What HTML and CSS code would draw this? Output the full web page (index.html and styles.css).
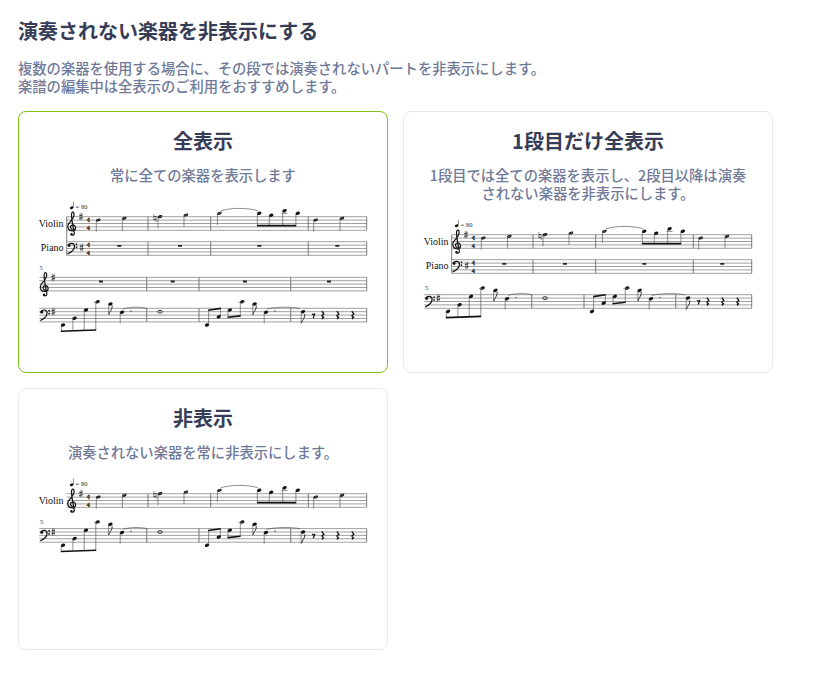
FILE: index.html
```html
<!DOCTYPE html>
<html lang="en">
<head>
<meta charset="UTF-8">
<meta name="viewport" content="width=device-width, initial-scale=1.0">
<title>演奏されない楽器を非表示にする</title>
<link rel="stylesheet" href="styles.css">
</head>
<body>
    <!-- Shared score parts, used by all three cards -->
    <svg class="score-defs" width="0" height="0" aria-hidden="true">
        <defs>
            <path id="hollow" d="M-2.3 .5C-2.3 -.7 -.5 -1.6 1 -1.6C2 -1.6 2.3 -1 2.3 -.5C2.3 .7 .5 1.6 -1 1.6C-2 1.6 -2.3 1 -2.3 .5ZM-1.4 .7C-1.1 1 .2 .3 1.4 -.7C1.1 -1 -.2 -.3 -1.4 .7Z" fill-rule="evenodd"/>
            <ellipse id="head" rx="2.3" ry="1.6" transform="rotate(-22)"/>
            <g id="sharp">
                <path class="thin" d="M-.8 -3.6V4M.8 -4V3.6"/>
                <path class="thick" d="M-1.8 -.9L1.8 -1.8M-1.8 1.8L1.8 .9"/>
            </g>
            <g id="natural">
                <path class="thin" d="M-1.2 -4V2M1.2 -2V4"/>
                <path class="thick" d="M-1.2 -1L1.2 -1.8M-1.2 1.8L1.2 1"/>
            </g>
            <path id="quarter-rest" class="rest-line" d="M-.9 -3.8L1.2 -1L-.9 .8L1.3 2.8C0 2.4 -1 3 0 4.2"/>
            <g id="treble-clef">
                <path class="clef" d="M6.2 12.8C3.4 12.8 2.9 8.8 5.6 8.3C9.6 7.8 10 13.6 6.2 14.1C2.2 14.6 .2 11.3 1.4 8.1C2.6 4.8 7.4 2.3 7.4 -2.2C7.4 -4.9 5.6 -5.4 5.1 -3.7C4.1 -1.2 5.1 2.3 6.6 11.3L7.6 16.3C7.9 18.8 4.6 19.3 4.1 17.3"/>
                <circle cx="4.8" cy="17.4" r="1.2"/>
            </g>
            <g id="bass-clef">
                <path class="clef" d="M1.6 3.8C2 1.2 7.8 .6 7.8 4.6C7.8 8.2 4 10.8 1 12.2"/>
                <circle cx="2.4" cy="3.9" r="1.4"/>
                <circle cx="9.8" cy="2.4" r=".9"/>
                <circle cx="9.8" cy="5.4" r=".9"/>
            </g>

            <g id="violin-staff">
                <path class="staff" d="M66.7 216.7H366.7M66.7 220.1H366.7M66.7 223.5H366.7M66.7 226.9H366.7M66.7 230.3H366.7"/>
                <path class="bar" d="M148 216.7V230.3M210.7 216.7V230.3M308.3 216.7V230.3M366.7 216.7V230.3"/>
                <use href="#treble-clef" x="66.7" y="216.7"/>
                <use href="#sharp" x="81" y="216.7"/>
                <use href="#hollow" x="98.3" y="220"/>
                <use href="#hollow" x="124.3" y="218.3"/>
                <use href="#natural" x="155" y="218"/>
                <use href="#hollow" x="160" y="216.7"/>
                <use href="#hollow" x="186" y="215"/>
                <use href="#hollow" x="219.4" y="213.3"/>
                <use href="#head" x="259.2" y="213.3"/>
                <use href="#head" x="271.2" y="215.3"/>
                <use href="#head" x="284.6" y="210.7"/>
                <use href="#head" x="297.8" y="213.3"/>
                <use href="#hollow" x="315.7" y="220"/>
                <use href="#hollow" x="342" y="218.3"/>
                <path class="stem" d="M96.3 220.5V231.7M122.4 218.8V230.7M158 217.2V228.3M184 215.5V227M217.4 213.8V225M313.7 220.5V231.7M340 218.8V230.7M257.3 213.8V226M269.3 215.8V226M282.7 211.2V226M295.9 213.8V226M281.5 213.4H287.6"/>
                <path class="beam" d="M257 225.6H296.2"/>
                <path class="tie" d="M220.7 210.8C232 207.6 246 207.6 257.8 210.6"/>
            </g>

            <g id="piano-staff">
                <path class="staff" d="M66.7 241.7H366.7M66.7 245.1H366.7M66.7 248.5H366.7M66.7 251.9H366.7M66.7 255.3H366.7"/>
                <path class="bar" d="M66.7 216.7V255.3M148 241.7V255.3M210.7 241.7V255.3M308.3 241.7V255.3M366.7 241.7V255.3"/>
                <use href="#bass-clef" x="66.7" y="241.7"/>
                <use href="#sharp" x="81.7" y="247.5"/>
                <path class="rests" d="M117.3 244.9h4v1.8h-4zM178 244.9h4v1.8h-4zM257.3 244.9h4v1.8h-4zM335.3 244.9h4v1.8h-4z"/>
            </g>

            <g id="treble-rests">
                <path class="staff" d="M39.3 277.3H366.7M39.3 280.7H366.7M39.3 284.1H366.7M39.3 287.5H366.7M39.3 290.9H366.7"/>
                <path class="bar heavy" d="M146.7 277.3V290.9M199 277.3V290.9M290.7 277.3V290.9"/>
                <path class="bar" d="M366.7 277.3V290.9"/>
                <use href="#treble-clef" x="39.3" y="277.3"/>
                <use href="#sharp" x="53.3" y="277.5"/>
                <path class="rests" d="M99 280.6h4v1.8h-4zM170.7 280.6h4v1.8h-4zM243 280.6h4v1.8h-4zM327 280.6h4v1.8h-4z"/>
            </g>

            <g id="bass-notes">
                <path class="staff" d="M39.3 308.3H366.7M39.3 311.7H366.7M39.3 315.1H366.7M39.3 318.5H366.7M39.3 321.9H366.7"/>
                <path class="bar heavy" d="M146.7 308.3V321.9M199 308.3V321.9M290.7 308.3V321.9"/>
                <path class="bar" d="M366.7 308.3V321.9"/>
                <use href="#bass-clef" x="39.3" y="308.3"/>
                <use href="#sharp" x="53.3" y="311.7"/>
                <use href="#head" x="63" y="325"/>
                <use href="#head" x="74.6" y="318.3"/>
                <use href="#head" x="86" y="310"/>
                <use href="#head" x="97.6" y="301.7"/>
                <use href="#head" x="110.4" y="304"/>
                <use href="#head" x="122" y="312.3"/>
                <circle cx="131" cy="310.9" r=".6"/>
                <ellipse class="whole" cx="160" cy="311.7" rx="2.3" ry="1.4"/>
                <use href="#head" x="207" y="325"/>
                <use href="#head" x="218.8" y="316.7"/>
                <use href="#head" x="229.8" y="310"/>
                <use href="#head" x="242.2" y="301.7"/>
                <use href="#head" x="254.6" y="304"/>
                <use href="#head" x="266" y="312.3"/>
                <circle cx="275" cy="310.9" r=".6"/>
                <use href="#head" x="303" y="311.7"/>
                <path class="stem" d="M61.3 325.5V331M72.9 318.8V330.6M84.2 310.5V330.2M95.8 302.2V329.8M94 302.2H100M108.6 304.5V315M120.2 312.8V323.4M208.6 324.5V310M220.4 316.2V308.6M228 310.5V317.4M240.3 302.2V316.2M238.5 302.2H244.5M252.8 304.5V315M264.2 312.8V323.4M301.2 312.2V323.4"/>
                <path class="beam" d="M60.8 331.2L96.2 330"/>
                <path class="beam" d="M208.2 310.2L220.8 308.4"/>
                <path class="beam" d="M227.6 317.3L240.6 315.9"/>
                <path class="flag" d="M108.8 314.6C109.6 311 112.6 310 112.2 305.6M252.9 314.6C253.7 311 256.7 310 256.3 305.6M301.4 323C302.2 319.4 305.2 318.4 304.8 314"/>
                <path class="tie" d="M123 309C130 306.8 140 306.6 147.5 308.4M266.7 309C276 306.8 291 306.6 300 308.4"/>
                <path class="rest-line" d="M312.2 313.6C312.8 314.8 314 314.8 314.9 313.6L313.2 318"/>
                <use href="#quarter-rest" x="322.7" y="315"/>
                <use href="#quarter-rest" x="337.7" y="315"/>
                <use href="#quarter-rest" x="352.7" y="315"/>
            </g>

            <g id="tempo">
                <ellipse cx="71.7" cy="207.7" rx="1.9" ry="1.3" transform="rotate(-22 71.7 207.7)"/>
                <path class="stem" d="M73.4 207.4V201.6"/>
            </g>
        </defs>
    </svg>

    <h1 class="page-title">演奏されない楽器を非表示にする</h1>
    <p class="page-desc">複数の楽器を使用する場合に、その段では演奏されないパートを非表示にします。<br>楽譜の編集中は全表示のご利用をおすすめします。</p>

    <div class="option-grid">
        <div class="option-card selected">
            <h2 class="card-title">全表示</h2>
            <p class="card-desc">常に全ての楽器を表示します</p>
            <svg class="score" viewBox="39 200 328 135">
                <use href="#tempo"/>
                <text class="tempo-text" x="75.6" y="208.6">= 80</text>
                <text class="part-name" x="63.6" y="226.6">Violin</text>
                <text class="time-sig" x="88.3" y="222.4">4</text>
                <text class="time-sig" x="88.3" y="229.6">4</text>
                <use href="#violin-staff"/>
                <text class="part-name" x="63.6" y="251">Piano</text>
                <text class="time-sig" x="88.3" y="247.4">4</text>
                <text class="time-sig" x="88.3" y="254.6">4</text>
                <use href="#piano-staff"/>
                <text class="measure-no" x="39.6" y="269.6">5</text>
                <use href="#treble-rests"/>
                <use href="#bass-notes"/>
            </svg>
        </div>

        <div class="option-card">
            <h2 class="card-title">1段目だけ全表示</h2>
            <p class="card-desc">1段目では全ての楽器を表示し、2段目以降は演奏されない楽器を非表示にします。</p>
            <svg class="score" viewBox="39 200 328 135">
                <use href="#tempo"/>
                <text class="tempo-text" x="75.6" y="208.6">= 80</text>
                <text class="part-name" x="63.6" y="226.6">Violin</text>
                <text class="time-sig" x="88.3" y="222.4">4</text>
                <text class="time-sig" x="88.3" y="229.6">4</text>
                <use href="#violin-staff"/>
                <text class="part-name" x="63.6" y="251">Piano</text>
                <text class="time-sig" x="88.3" y="247.4">4</text>
                <text class="time-sig" x="88.3" y="254.6">4</text>
                <use href="#piano-staff"/>
                <text class="measure-no" x="40" y="272">5</text>
                <use href="#bass-notes" y="-31.6"/>
            </svg>
        </div>

        <div class="option-card">
            <h2 class="card-title">非表示</h2>
            <p class="card-desc">演奏されない楽器を常に非表示にします。</p>
            <svg class="score" viewBox="39 200 328 135">
                <use href="#tempo"/>
                <text class="tempo-text" x="75.6" y="208.6">= 80</text>
                <text class="part-name" x="63.6" y="226.6">Violin</text>
                <text class="time-sig" x="88.3" y="222.4">4</text>
                <text class="time-sig" x="88.3" y="229.6">4</text>
                <use href="#violin-staff"/>
                <text class="measure-no" x="40" y="247">5</text>
                <use href="#bass-notes" y="-56.7"/>
            </svg>
        </div>
    </div>
</body>
</html>
```

FILE: styles.css
```css
body {
    margin: 0;
    padding: 19px 18px 40px;
    background: #fff;
    color: #373d57;
    font-family: "Noto Sans CJK JP", "Noto Sans", sans-serif;
}

.score-defs {
    display: block;
    height: 0;
}

.page-title {
    margin: 0;
    font-size: 20px;
    line-height: 24px;
    font-weight: 700;
}

.page-desc {
    margin: 16px 0 16px;
    font-size: 14.3px;
    line-height: 18px;
    font-weight: 500;
    color: #6f7a99;
}

/* Option cards */
.option-grid {
    display: grid;
    grid-template-columns: 370px 370px;
    grid-auto-rows: 262px;
    gap: 15px;
}

.option-card {
    box-sizing: border-box;
    padding: 16px 20px 0;
    border: 1px solid #e8e9ee;
    border-radius: 8px;
    text-align: center;
}

.option-card.selected {
    border-color: #7ec31e;
}

.card-title {
    margin: 0;
    font-size: 20px;
    line-height: 26px;
    font-weight: 700;
}

.card-desc {
    margin: 12px 0 16px;
    font-size: 14.3px;
    line-height: 18px;
    font-weight: 500;
    color: #6f7a99;
}

/* Score drawing */
.score {
    display: block;
    width: 328px;
    height: 135px;
    overflow: visible;
    fill: #111;
}

.staff {
    fill: none;
    stroke: #808080;
    stroke-width: 0.75;
}

.bar {
    fill: none;
    stroke: #5c5c5c;
    stroke-width: 0.8;
}

.bar.heavy {
    stroke: #808080;
    stroke-width: 1.1;
}

.stem, .thin {
    fill: none;
    stroke: #555;
    stroke-width: 0.65;
}

.thick {
    fill: none;
    stroke: #222;
    stroke-width: 0.9;
}

.beam {
    fill: none;
    stroke: #111;
    stroke-width: 1.6;
}

.tie {
    fill: none;
    stroke: #444;
    stroke-width: 0.6;
}

.clef {
    fill: none;
    stroke: #111;
    stroke-width: 1.2;
}

.flag {
    fill: none;
    stroke: #222;
    stroke-width: 0.9;
}

.rest-line {
    fill: none;
    stroke: #111;
    stroke-width: 1.25;
}

.whole {
    fill: none;
    stroke: #222;
    stroke-width: 0.9;
}

.rests {
    fill: #222;
}

.part-name {
    font-family: "Liberation Serif", serif;
    font-size: 10px;
    text-anchor: end;
    fill: #111;
}

.tempo-text {
    font-family: "Liberation Serif", serif;
    font-size: 6.5px;
    fill: #333;
}

.measure-no {
    font-family: "Liberation Serif", serif;
    font-size: 6.5px;
    fill: #333;
}

.time-sig {
    font-family: "Liberation Serif", serif;
    font-size: 6.2px;
    font-weight: 700;
    text-anchor: middle;
    fill: #111;
    stroke: #111;
    stroke-width: 0.3;
}
```
